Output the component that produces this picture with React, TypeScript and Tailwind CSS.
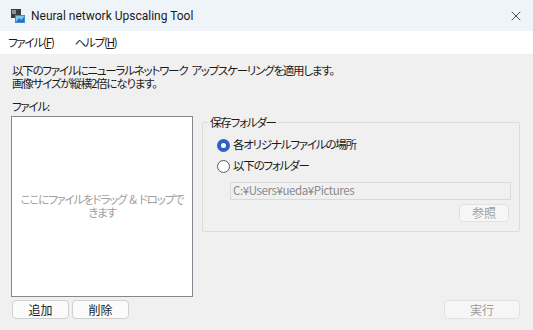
import { X } from 'lucide-react';

const jp = { fontFamily: '"Noto Sans CJK JP", "Noto Sans", sans-serif', fontFeatureSettings: '"palt"' };

function AppIcon() {
    return (
        <svg width="16" height="16" viewBox="0 0 16 16">
            <rect x="1" y="1" width="10" height="9" fill="#3a3f45" />
            <rect x="2" y="2" width="4" height="4" fill="#8c949c" />
            <rect x="5" y="7" width="10" height="8" fill="#3b8fd6" />
            <rect x="6" y="8" width="8" height="6" fill="#7fc4f2" />
            <path d="M6 14 L9 10 L11 12 L14 9 L14 14 Z" fill="#2f6fae" />
        </svg>
    );
}

function Radio({ checked, label }: { checked?: boolean; label: string }) {
    return (
        <div className="flex items-center gap-[3px] h-[20px]">
            {checked ? (
                <span className="w-[13px] h-[13px] rounded-full bg-[#2f62c0] flex items-center justify-center">
                    <span className="w-[5px] h-[5px] rounded-full bg-white" />
                </span>
            ) : (
                <span className="w-[13px] h-[13px] rounded-full border border-[#5a5a5a] bg-white" />
            )}
            <span className="text-[11.5px] text-[#1a1a1a]">{label}</span>
        </div>
    );
}

function Button({ label, disabled, className }: { label: string; disabled?: boolean; className: string }) {
    return (
        <div
            className={`flex items-center justify-center rounded-[4px] border text-[12px] tracking-normal ${disabled
                ? 'bg-[#f6f6f6] border-[#e2e2e2] text-[#9d9d9d]'
                : 'bg-[#fbfbfb] border-[#d0d0d0] text-[#1a1a1a]'
                } ${className}`}
        >
            {label}
        </div>
    );
}

export default function App() {
    return (
        <div className="w-[533px] h-[330px] bg-[#f0f0f0] flex flex-col overflow-hidden tracking-[-1.2px]" style={jp}>
            {/* Title bar */}
            <div className="h-[31px] bg-[#eff4f9] flex items-center pl-[10px] pr-[8px] shrink-0">
                <AppIcon />
                <span className="ml-[5px] text-[12px] text-[#1a1a1a] tracking-normal" style={{ fontFamily: 'Roboto, sans-serif' }}>
                    Neural network Upscaling Tool
                </span>
                <X className="ml-auto mr-[1px] text-[#222]" size={16} strokeWidth={1.2} />
            </div>

            {/* Menu */}
            <div className="h-[23px] bg-white flex items-center text-[11.5px] text-[#1a1a1a] shrink-0">
                <span className="ml-[8px]">ファイル(<span className="underline">F</span>)</span>
                <span className="ml-[21px]">ヘルプ(<span className="underline">H</span>)</span>
            </div>

            {/* Body */}
            <div className="flex-1 flex flex-col px-[11px] pt-[10px]">
                <div className="text-[11.5px] leading-[13px] text-[#1a1a1a] pl-[1px]">
                    <div>
                        以下のファイルにニューラルネットワーク<span className="inline-block w-[4px]" />アップスケーリングを適用します。
                    </div>
                    <div>画像サイズが縦横2倍になります。</div>
                </div>

                <div className="flex mt-[9px]">
                    <div className="flex flex-col w-[182px]">
                        <div className="text-[11.5px] leading-[14px] text-[#1a1a1a] pl-[1px] h-[17px]">ファイル:</div>
                        <div className="h-[181px] bg-white border border-[#828790] flex items-end justify-center pb-[77px]">
                            <div className="text-[11.5px] leading-[13px] text-[#a0a0a0] text-center">
                                ここにファイルをドラッグ<span className="inline-block w-[3px]" />&<span className="inline-block w-[3px]" />ドロップで
                                <br />
                                きます
                            </div>
                        </div>
                        <div className="flex gap-[3px] mt-[3px] pl-[1px]">
                            <Button label="追加" className="w-[57px] h-[19px]" />
                            <Button label="削除" className="w-[57px] h-[19px]" />
                        </div>
                    </div>

                    <div className="flex-1 flex flex-col ml-[9px] pr-[2px]">
                        <div className="relative mt-[23px] h-[110px] border border-[#dcdcdc] rounded-[2px]">
                            <span className="absolute -top-[8px] left-[5px] px-[2px] bg-[#f0f0f0] text-[11.5px] leading-[14px] text-[#1a1a1a]">
                                保存フォルダー
                            </span>
                            <div className="flex flex-col pl-[14px] pt-[12px]">
                                <Radio checked label="各オリジナルファイルの場所" />
                                <div className="mt-[1px]">
                                    <Radio label="以下のフォルダー" />
                                </div>
                                <div className="ml-[13px] mt-[6px] mr-[8px] h-[18px] border border-[#d9d9d9] bg-[#f0f0f0] flex items-center pl-[2px] text-[11.5px] text-[#8a8a8a] tracking-[-0.4px]">
                                    C:¥Users¥ueda¥Pictures
                                </div>
                                <div className="flex justify-end mr-[10px] mt-[4px]">
                                    <Button label="参照" disabled className="w-[50px] h-[18px]" />
                                </div>
                            </div>
                        </div>
                        <div className="flex-1" />
                        <div className="flex justify-end">
                            <Button label="実行" disabled className="w-[76px] h-[19px]" />
                        </div>
                    </div>
                </div>
            </div>
        </div>
    );
}
